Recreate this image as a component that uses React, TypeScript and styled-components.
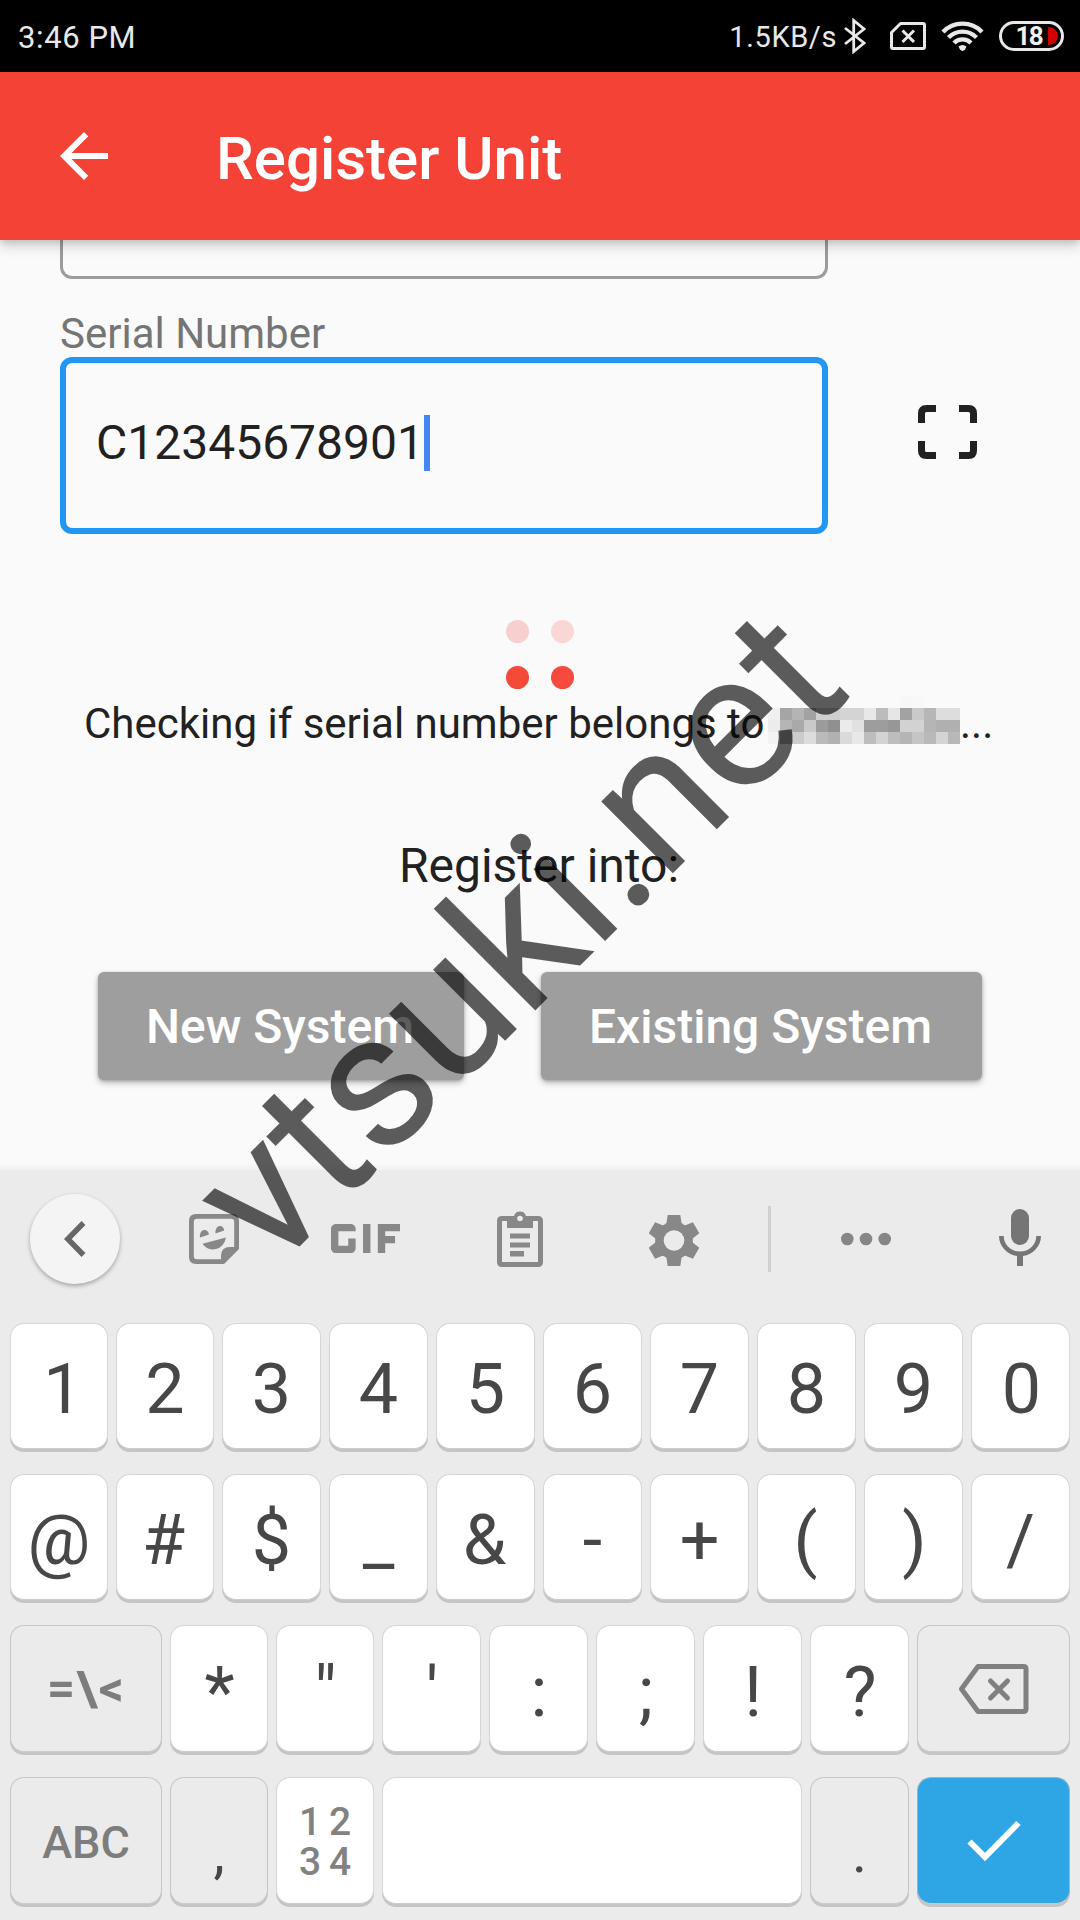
import React from "react";
import styled, { createGlobalStyle } from "styled-components";
import { MdGif } from "react-icons/md";

const GlobalStyle = createGlobalStyle`
  * { box-sizing: border-box; }
  html, body { margin: 0; padding: 0; }
  body { width: 1080px; background: #fafafa; overflow: hidden; }
`;

const Screen = styled.div`
  position: relative;
  width: 1080px;
  height: 1920px;
  display: flex;
  flex-direction: column;
  overflow: hidden;
  background: #fafafa;
  color: #212121;
  font-family: Roboto, "Noto Sans", sans-serif;
`;

/* ---------- status bar ---------- */

const StatusBar = styled.div`
  height: 72px;
  flex: none;
  display: flex;
  align-items: center;
  padding: 0 16px 0 18px;
  background: #000;
  color: #e8e8e8;
`;

const Clock = styled.span`
  font-size: 31px;
  line-height: 36px;
  margin-top: 3px;
  letter-spacing: 0.6px;
`;

const StatusRight = styled.div`
  margin-left: auto;
  display: flex;
  align-items: center;
`;

const NetSpeed = styled.span`
  font-size: 29px;
  line-height: 36px;
  letter-spacing: 0.6px;
  margin: 1px 6px 0 0;
`;

const StatusIcon = styled.svg<{ $gap?: number }>`
  display: block;
  margin-right: ${(p) => p.$gap ?? 0}px;
`;

const Battery = styled.div`
  width: 65px;
  height: 30px;
  display: flex;
  align-items: center;
  justify-content: flex-end;
  border: 3px solid #e8e8e8;
  border-radius: 15px;
  padding-right: 3px;
  font-size: 26px;
  font-weight: 700;
  line-height: 26px;
  letter-spacing: -1.7px;
  color: #f0f0f0;
`;

const BatteryFill = styled.span`
  width: 10px;
  height: 18px;
  margin-left: 6px;
  background: #d40000;
  border-radius: 0 9px 9px 0;
`;

/* ---------- app bar ---------- */

const AppBar = styled.header`
  position: relative;
  z-index: 1;
  height: 168px;
  flex: none;
  display: flex;
  align-items: center;
  padding-left: 60px;
  background: #f44336;
  color: #fff;
  box-shadow: 0 6px 12px rgba(0, 0, 0, 0.18), 0 2px 6px rgba(0, 0, 0, 0.1);
`;

const Title = styled.h1`
  margin: 5px 0 0 108px;
  font-size: 60px;
  font-weight: 500;
  line-height: 70px;
`;

/* ---------- form ---------- */

const Form = styled.main`
  height: 930px;
  flex: none;
  display: flex;
  flex-direction: column;
  background: linear-gradient(#fafafa 923px, #f1f1f1 930px);
`;

const PreviousField = styled.div`
  width: 768px;
  height: 39px;
  flex: none;
  margin-left: 60px;
  border: 3px solid #9c9c9c;
  border-top: 0;
  border-radius: 0 0 12px 12px;
`;

const Label = styled.label`
  margin: 31px 0 0 60px;
  font-size: 42px;
  line-height: 47px;
  color: #757575;
`;

const FieldRow = styled.div`
  display: flex;
  align-items: center;
  gap: 90px;
  padding-left: 60px;
`;

const Field = styled.div`
  width: 768px;
  height: 177px;
  display: flex;
  align-items: flex-start;
  padding: 52px 30px 0;
  border: 6px solid #2196f3;
  border-radius: 12px;
  font-size: 48px;
  line-height: 56px;
`;

const Caret = styled.span`
  width: 6px;
  height: 56px;
  background: #4285f4;
`;

const ScanIcon = styled.svg`
  display: block;
  margin-top: -27px;
`;

const Spinner = styled.div`
  margin-top: 86px;
  align-self: center;
  display: grid;
  grid-template-columns: 23px 23px;
  gap: 23px 22px;
`;

const Dot = styled.span<{ $color: string }>`
  height: 23px;
  border-radius: 50%;
  background: ${(p) => p.$color};
`;

const Checking = styled.div`
  margin-top: 11px;
  height: 48px;
  display: flex;
  padding-left: 84px;
  font-size: 42px;
  line-height: 48px;
  white-space: pre;
`;

const CheckingText = styled.span`
  width: 684px;
`;

const Mosaic = styled.span`
  display: grid;
  grid-template-columns: repeat(16, 12px);
  grid-auto-rows: 12px;
  margin-top: -4px;
`;

const Cell = styled.span<{ $tone: string }>`
  background: #${(p) => p.$tone.repeat(3)};
`;

const Prompt = styled.p`
  margin: 90px 2px 0 0;
  font-size: 48px;
  line-height: 56px;
  text-align: center;
`;

const Actions = styled.div`
  display: flex;
  justify-content: center;
  gap: 77px;
  margin-top: 78px;
`;

const ActionButton = styled.button<{ $width: number }>`
  width: ${(p) => p.$width}px;
  height: 108px;
  padding: 2px 2px 0 0;
  border: 0;
  border-radius: 6px;
  background: #9e9e9e;
  color: #fff;
  font: 500 48px/56px Roboto, sans-serif;
  box-shadow: 0 3px 6px rgba(0, 0, 0, 0.25), 0 1px 3px rgba(0, 0, 0, 0.18);
`;

/* ---------- keyboard ---------- */

const Keyboard = styled.section`
  flex: 1;
  background: #ebebeb;
`;

const Toolbar = styled.div`
  height: 138px;
  display: flex;
  align-items: center;
  padding-left: 30px;
  margin-bottom: 15px;
`;

const CollapseButton = styled.div`
  width: 90px;
  height: 90px;
  flex: none;
  display: flex;
  align-items: center;
  justify-content: center;
  border-radius: 50%;
  background: #f4f4f4;
  box-shadow: 0 2px 4px rgba(0, 0, 0, 0.3);
`;

const ToolIcon = styled.svg<{ $left: number }>`
  display: block;
  flex: none;
  margin-left: ${(p) => p.$left}px;
`;

const GifIcon = styled(MdGif)`
  display: block;
  flex: none;
  width: 69px;
  height: 29px;
  margin: -2px 0 0 92px;
  color: #888;
`;

const Separator = styled.span`
  width: 3px;
  height: 66px;
  margin-left: 69px;
  background: #cfd1d1;
`;

const Row = styled.div<{ $columns: string; $height?: number }>`
  display: grid;
  grid-template-columns: ${(p) => p.$columns};
  column-gap: 8px;
  height: ${(p) => p.$height ?? 151}px;
  margin: 0 10px;
`;

const Key = styled.div<{ $kind?: "plain" | "muted" | "go"; $tall?: boolean }>`
  height: ${(p) => (p.$tall ? 127 : 126)}px;
  display: flex;
  justify-content: center;
  align-items: center;
  border: 1px solid
    ${(p) => (p.$kind === "go" ? "#8fb8cd" : p.$kind === "muted" ? "#c6c6c6" : "#d6d6d6")};
  border-bottom-color: #cbcbcb;
  border-radius: 14px;
  background: ${(p) =>
    p.$kind === "go" ? "#2ea5e5" : p.$kind === "muted" ? "#ebebeb" : "#fff"};
  box-shadow: 0 3px 0 #c5c5c5;
  color: #474747;
`;

const Glyph = styled.span<{ $size?: number; $drop?: number; $nudge?: number }>`
  font-size: ${(p) => p.$size ?? 70}px;
  line-height: 80px;
  margin-top: ${(p) => p.$drop ?? 6}px;
  margin-left: ${(p) => (p.$nudge ?? 0) * 2}px;
`;

const ModeText = styled.span<{ $size: number; $spacing?: number; $drop: number; $weight?: number }>`
  font-size: ${(p) => p.$size}px;
  font-weight: ${(p) => p.$weight ?? 500};
  line-height: 56px;
  letter-spacing: ${(p) => p.$spacing ?? 0}px;
  margin-top: ${(p) => p.$drop}px;
  color: #7d7d7d;
`;

const DigitPad = styled.span`
  display: grid;
  grid-template-columns: 30px 30px;
  grid-auto-rows: 40px;
  justify-items: center;
  margin: 2px 0 0 0;
  font-size: 39px;
  font-weight: 500;
  line-height: 40px;
  color: #828282;
`;

/* ---------- overlay ---------- */

const Watermark = styled.div`
  position: absolute;
  left: 540px;
  top: 960px;
  z-index: 5;
  font-size: 191.6px;
  line-height: 224px;
  white-space: nowrap;
  color: rgba(0, 0, 0, 0.637);
  transform: translate(-50%, -50%) rotate(-45deg) translateY(-32.5px);
  pointer-events: none;
`;

const TOP_COLUMNS = "98px 98px repeat(8, 99px)";
const SYMBOL_COLUMNS = "152px 98px 98px repeat(5, 99px) 153px";
const SPACE_COLUMNS = "152px 98px 98px 420px 99px 153px";

const NUDGES: Record<string, number> = { "1": 4, "#": -1.5, "(": -1, ")": 1, "0": 1, "&": -1 };

const MOSAIC = [
  "fa fa fa fa fa fa fa fa fa fa fa f7 f8 fa fa fa",
  "f0 a5 b4 a2 cf ce d4 d4 e8 bc e6 a2 c9 b6 dd dd",
  "ec b5 a9 c9 9b 90 eb e1 9d 9d 97 d2 d2 b5 b0 b0",
  "f3 b2 cc dc ba b1 da e8 bd d3 bd b5 c5 b9 d4 b8",
].flatMap((line) => line.split(" "));

const gearTeeth = [0, 60, 120, 180, 240, 300];

export default function App() {
  return (
    <Screen>
      <GlobalStyle />
      <StatusBar>
        <Clock>3:46 PM</Clock>
        <StatusRight>
          <NetSpeed>1.5KB/s</NetSpeed>
          <StatusIcon $gap={24} width="23" height="36" viewBox="843 18 23 36" fill="none" stroke="#e8e8e8" strokeWidth="2.8">
            <path d="M845 28l19 15-10.300 8.500V20.500L864 29l-19 15" />
          </StatusIcon>
          <StatusIcon $gap={15} width="36" height="30" viewBox="890 21 36 30" fill="none" stroke="#e8e8e8" strokeWidth="3">
            <path d="M900.500 23.500H923q1.500 0 1.500 1.500V47q0 1.500-1.500 1.500H893q-1.500 0-1.500-1.500V32.500z" strokeLinejoin="round" />
            <path d="M902.500 30.500l11.500 11.500M914 30.500L902.500 42" />
          </StatusIcon>
          <StatusIcon $gap={15} width="43" height="32" viewBox="940.500 20 43 32" fill="none" stroke="#e8e8e8" strokeWidth="4.300">
            <path d="M942.500 32A27 27 0 0 1 981.500 32" />
            <path d="M948 37.500A19.500 19.500 0 0 1 976 37.500" />
            <path d="M953.500 43A12 12 0 0 1 970.500 43" />
            <path d="M958 46.500q4-3 8 0l-1.500 3-2.500 1.800-2.500-1.800z" fill="#e8e8e8" stroke="none" />
          </StatusIcon>
          <Battery>
            18
            <BatteryFill />
          </Battery>
        </StatusRight>
      </StatusBar>

      <AppBar>
        <svg width="48" height="48" viewBox="4 4 16 16" fill="#fff">
          <path d="M20 11H7.830l5.590-5.590L12 4l-8 8 8 8 1.410-1.410L7.830 13H20v-2z" />
        </svg>
        <Title>Register Unit</Title>
      </AppBar>

      <Form>
        <PreviousField />
        <Label>Serial Number</Label>
        <FieldRow>
          <Field>
            C12345678901
            <Caret />
          </Field>
          <ScanIcon width="59" height="54" viewBox="0 0 59 54" fill="none" stroke="#212121" strokeWidth="7">
            <path d="M18 3.500H8.500q-5 0-5 5V18M41 3.500h9.500q5 0 5 5V18M18 50.500H8.500q-5 0-5-5V36M41 50.500h9.500q5 0 5-5V36" />
          </ScanIcon>
        </FieldRow>

        <Spinner>
          <Dot $color="#f7cfcf" />
          <Dot $color="#fad7d5" />
          <Dot $color="#f44a38" />
          <Dot $color="#f54a3c" />
        </Spinner>
        <Checking>
          <CheckingText>Checking if serial number belongs to </CheckingText>
          <Mosaic>
            {MOSAIC.map((tone, i) => (
              <Cell key={i} $tone={tone} />
            ))}
          </Mosaic>
          ...
        </Checking>

        <Prompt>Register into:</Prompt>
        <Actions>
          <ActionButton $width={366}>New System</ActionButton>
          <ActionButton $width={441}>Existing System</ActionButton>
        </Actions>
      </Form>

      <Keyboard>
        <Toolbar>
          <CollapseButton>
            <svg width="22" height="36" viewBox="0 0 22 36" fill="none" stroke="#676767" strokeWidth="5.500">
              <path d="M19.500 2L3.800 18l15.700 16" />
            </svg>
          </CollapseButton>
          <ToolIcon $left={69} width="50" height="50" viewBox="0 0 50 50" fill="#888">
            <path
              fillRule="evenodd"
              d="M7 0H43Q50 0 50 7V35L35 50H7Q0 50 0 43V7Q0 0 7 0ZM8 4.800Q4.800 4.800 4.800 8V42Q4.800 45.200 8 45.200H32V42Q32 33 41 33H45.200V8Q45.200 4.800 42 4.800Z"
            />
            <path d="M11 23.500Q10.300 17 15 16Q19 15.500 20 20.500ZM26.500 19.500Q26 13 30.500 12Q34.500 11.500 35.200 16.500Z" />
            <path d="M13.500 29.800L37 23.500Q35 33 27 35Q18.500 37 13.500 29.800Z" />
          </ToolIcon>
          <GifIcon viewBox="5 9 14 6" preserveAspectRatio="none" />
          <ToolIcon $left={97} width="46" height="56" viewBox="0 0 46 56" fill="#888">
            <path
              fillRule="evenodd"
              d="M5 5H17A6.300 6.300 0 0 1 29 5H41Q46 5 46 10V51Q46 56 41 56H5Q0 56 0 51V10Q0 5 5 5ZM5 10V51H41V10H36V17H10V10ZM23 4.700A2.800 2.800 0 1 0 23 10.300A2.800 2.800 0 1 0 23 4.700Z"
            />
            <path d="M13 22.500H33V27.500H13ZM13 31.500H33V36.500H13ZM13 40H27V45.500H13Z" />
          </ToolIcon>
          <ToolIcon $left={106} width="50" height="54" viewBox="-25 -28.500 50 54" fill="#888">
            <mask id="gear-hole">
              <rect x="-30" y="-30" width="60" height="60" fill="#fff" />
              <circle r="10.300" fill="#000" />
            </mask>
            <g mask="url(#gear-hole)">
              <circle r="18.800" />
              {gearTeeth.map((angle) => (
                <path key={angle} transform={`rotate(${angle})`} d="M-6.300-25.500H6.300L7.500-17.500L10-14H-10L-7.500-17.500Z" />
              ))}
            </g>
          </ToolIcon>
          <Separator />
          <ToolIcon $left={70} width="50" height="14" viewBox="0 0 50 14" fill="#868686">
            <circle cx="6.300" cy="7" r="6.300" />
            <circle cx="25" cy="7" r="6.300" />
            <circle cx="43.700" cy="7" r="6.300" />
          </ToolIcon>
          <ToolIcon $left={108} width="42" height="60" viewBox="0 0 42 60" fill="#757575">
            <rect x="12" y="0" width="18" height="36" rx="9" />
            <path d="M0 27H4.700A16.300 15.500 0 0 0 37.300 27H42A21 20.500 0 0 1 24 47V57H18V47A21 20.500 0 0 1 0 27Z" />
          </ToolIcon>
        </Toolbar>

        <Row $columns={TOP_COLUMNS}>
          {"1234567890".split("").map((c) => (
            <Key key={c}>
              <Glyph $nudge={NUDGES[c]}>{c}</Glyph>
            </Key>
          ))}
        </Row>
        <Row $columns={TOP_COLUMNS}>
          {"@#$_&-+()/".split("").map((c) => (
            <Key key={c}>
              <Glyph $nudge={NUDGES[c]}>{c}</Glyph>
            </Key>
          ))}
        </Row>
        <Row $columns={SYMBOL_COLUMNS} $height={152}>
          <Key $kind="muted" $tall>
            <ModeText $size={49} $spacing={1.5} $drop={0} $weight={700}>=\&lt;</ModeText>
          </Key>
          {["*", '"', "'", ":", ";", "!", "?"].map((c) => (
            <Key key={c} $tall>
              <Glyph $drop={6} $nudge={0.5}>{c}</Glyph>
            </Key>
          ))}
          <Key $kind="muted" $tall>
            <svg width="71" height="50" viewBox="0 0 71 50" fill="none" stroke="#808080" strokeWidth="5">
              <path d="M20 2.500H65.500Q68 2.500 68 5V45Q68 47.500 65.500 47.500H20L3.500 25Z" strokeLinejoin="round" />
              <path d="M32.500 17L49.500 34M49.500 17L32.500 34" strokeLinecap="round" />
            </svg>
          </Key>
        </Row>
        <Row $columns={SPACE_COLUMNS}>
          <Key $kind="muted" $tall>
            <ModeText $size={45} $drop={4}>ABC</ModeText>
          </Key>
          <Key $kind="muted" $tall>
            <Glyph $size={57} $drop={25}>,</Glyph>
          </Key>
          <Key $tall>
            <DigitPad>
              <span>1</span>
              <span>2</span>
              <span>3</span>
              <span>4</span>
            </DigitPad>
          </Key>
          <Key $tall />
          <Key $kind="muted" $tall>
            <Glyph $size={57} $drop={25}>.</Glyph>
          </Key>
          <Key $kind="go" $tall>
            <svg width="54" height="42" viewBox="0 0 54 42" fill="none" stroke="#fff" strokeWidth="6">
              <path d="M2.500 21.500L18 37L51.500 3" />
            </svg>
          </Key>
        </Row>
      </Keyboard>

      <Watermark>vtsuki.net</Watermark>
    </Screen>
  );
}
